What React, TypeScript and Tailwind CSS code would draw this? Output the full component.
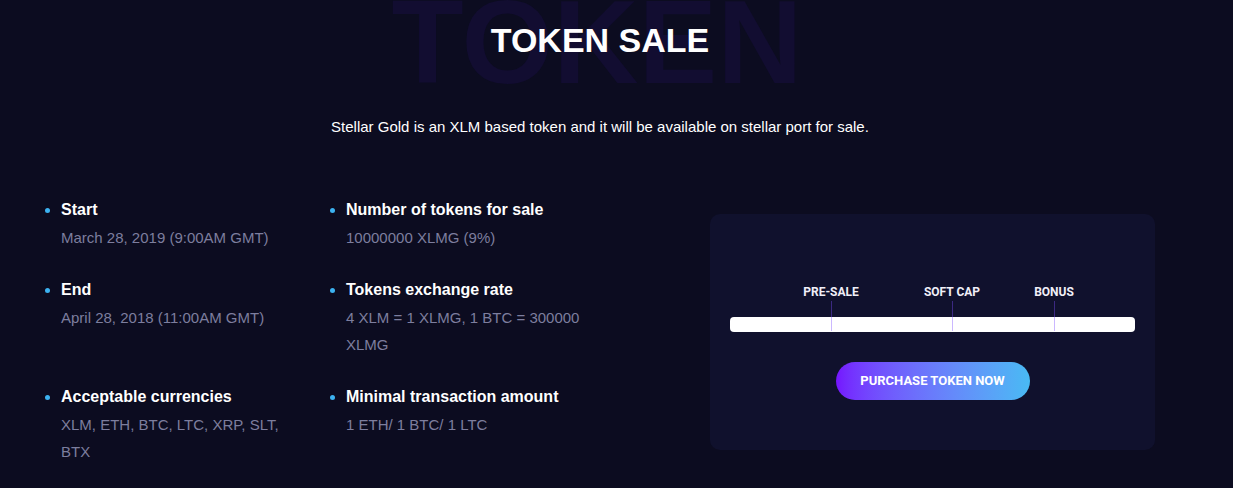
import React from "react";

const items = [
  { t: "Start", d: "March 28, 2019 (9:00AM GMT)" },
  { t: "Number of tokens for sale", d: "10000000 XLMG (9%)" },
  { t: "End", d: "April 28, 2018 (11:00AM GMT)" },
  { t: "Tokens exchange rate", d: "4 XLM = 1 XLMG, 1 BTC = 300000 XLMG" },
  { t: "Acceptable currencies", d: "XLM, ETH, BTC, LTC, XRP, SLT, BTX" },
  { t: "Minimal transaction amount", d: "1 ETH/ 1 BTC/ 1 LTC" },
];

const markers = [
  { label: "PRE-SALE", left: "left-[101px]" },
  { label: "SOFT CAP", left: "left-[222px]" },
  { label: "BONUS", left: "left-[324px]" },
];

export default function App() {
  return (
    <div className="min-h-screen w-full bg-[#0c0c20] font-['Liberation_Sans',Arial,sans-serif] overflow-hidden">
      <div className="w-[1200px]">
        <div className="relative pt-[20px] text-center">
          <div className="pointer-events-none absolute left-0 right-0 top-[-17px] text-center text-[118px] leading-[118px] font-bold text-[#120d31] select-none pr-[6px]">
            TOKEN
          </div>
          <h2 className="relative text-[34px] leading-[40px] font-bold text-white">TOKEN SALE</h2>
          <p className="relative mt-[55px] text-[15px] leading-[24px] text-white">
            Stellar Gold is an XLM based token and it will be available on stellar port for sale.
          </p>
        </div>

        <div className="mt-[59px] flex px-[45px]">
          <div className="grid grid-cols-[285px_285px] gap-y-[27px] w-[635px] content-start">
            {items.map((it) => (
              <div key={it.t} className="flex">
                <div className="w-[16px] shrink-0 pt-[10px]">
                  <div className="h-[5px] w-[5px] rounded-full bg-[#3cb2f0]" />
                </div>
                <div className="w-[240px]">
                  <div className="text-[16px] leading-[24px] font-bold text-white">{it.t}</div>
                  <div className="mt-[2px] text-[15px] leading-[27px] text-[#7d7e9e]">{it.d}</div>
                </div>
              </div>
            ))}
          </div>

          <div className="ml-[30px] mt-[16px] h-[236px] w-[445px] rounded-[10px] bg-[#10112d] px-[20px] pt-[71px] font-['Roboto',sans-serif]">
            <div className="relative pt-[32px]">
              {markers.map((m) => (
                <div key={m.label} className={`absolute top-0 ${m.left} w-0 flex justify-center`}>
                  <span className="whitespace-nowrap text-[12px] leading-[14px] font-bold text-[#f0eff8]">{m.label}</span>
                </div>
              ))}
              <div className="h-[15px] w-full rounded-[4px] bg-white" />
              {markers.map((m) => (
                <div key={m.label + "t"} className={`absolute top-[16px] ${m.left} h-[30px] w-[1px] bg-[#7c4dff]/40`} />
              ))}
            </div>
            <div className="mt-[30px] flex justify-center">
              <button className="h-[38px] w-[194px] rounded-full bg-gradient-to-r from-[#7513fe] to-[#48baf4] text-[13px] font-bold text-white">
                PURCHASE TOKEN NOW
              </button>
            </div>
          </div>
        </div>
      </div>
    </div>
  );
}
